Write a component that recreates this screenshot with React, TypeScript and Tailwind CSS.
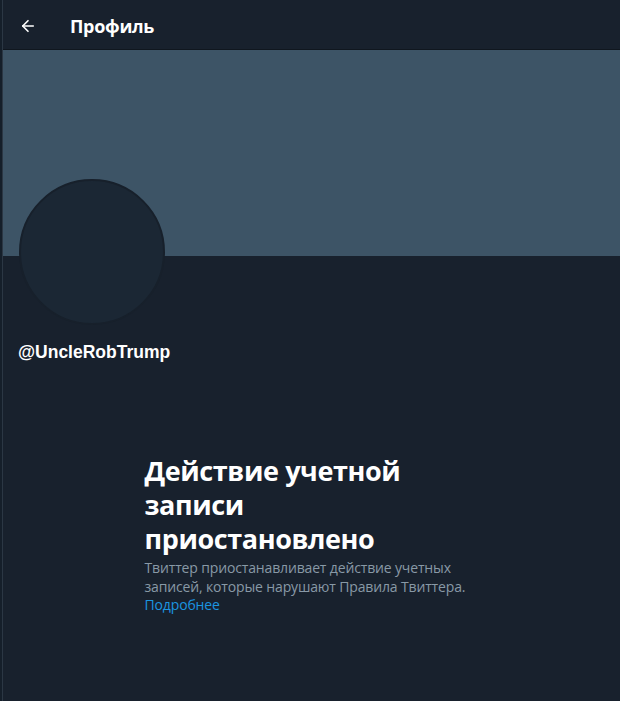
import { ArrowLeft } from "lucide-react";

export default function App() {
    return (
        <div className="min-h-[701px] w-[620px] bg-[#151f2a] pl-[2px] font-['Open_Sans',sans-serif]">
            <div className="min-h-[701px] border-l border-[#2b3744] bg-[#18212d]">
                <div className="flex h-[50px] items-center border-b border-[#10171f] pt-[3px]">
                    <div className="flex w-[67px] pl-[16px]">
                        <ArrowLeft className="h-[18px] w-[18px] text-white" strokeWidth={2.2} />
                    </div>
                    <h2 className="text-[18px] font-bold tracking-[-0.3px] text-white">Профиль</h2>
                </div>
                <div className="h-[206px] bg-[#3d5466]" />
                <div className="ml-[16px] -mt-[77px] h-[146px] w-[146px] rounded-full border-[2px] border-[#17202b] bg-[#1b2734]" />
                <div className="mt-[14px] pl-[15px] font-['Liberation_Sans',sans-serif] text-[17.5px] font-bold text-white">@UncleRobTrump</div>
                <div className="mx-auto mt-[89px] w-[336px] pl-[1px]">
                    <h1 className="text-[27px] font-bold leading-[34px] tracking-[-0.4px] text-white">
                        Действие учетной записи приостановлено
                    </h1>
                    <p className="mt-[3px] text-[14px] leading-[18.5px] tracking-[-0.15px] text-[#8899a6]">
                        Твиттер приостанавливает действие учетных записей, которые нарушают Правила Твиттера.
                        <br />
                        <span className="text-[#1b95e0]">Подробнее</span>
                    </p>
                </div>
            </div>
        </div>
    );
}
